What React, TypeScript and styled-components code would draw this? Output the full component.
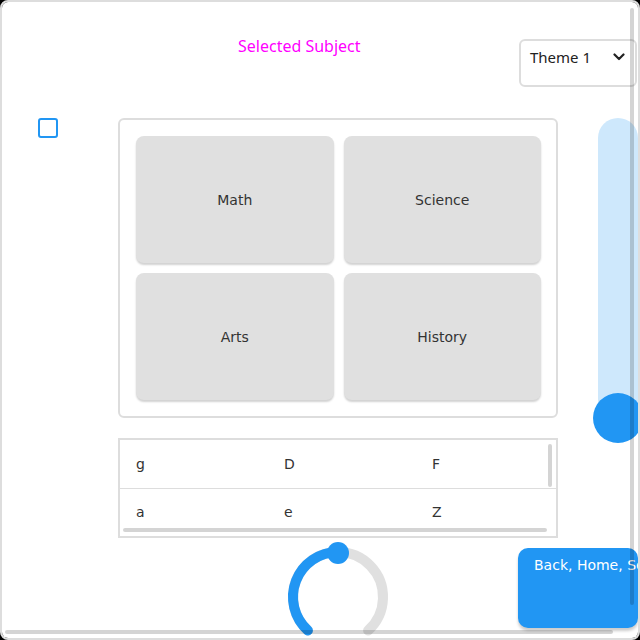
import React from "react";
import styled, { createGlobalStyle } from "styled-components";

const Global = createGlobalStyle`
  html, body { margin: 0; padding: 0; background: #000; }
  body { font-family: "DejaVu Sans", sans-serif; }
  * { box-sizing: border-box; }
`;

const Shell = styled.div`
  position: relative;
  width: 640px;
  height: 640px;
`;

const Frame = styled.div`
  width: 640px;
  height: 640px;
  background: #fff;
  border: 2px solid #ddd;
  border-radius: 8px;
  overflow: auto;
  scrollbar-width: none;
`;

const ScrollThumb = styled.div<{ $x: number; $y: number; $w: number; $h: number }>`
  position: absolute;
  left: ${(p) => p.$x}px;
  top: ${(p) => p.$y}px;
  width: ${(p) => p.$w}px;
  height: ${(p) => p.$h}px;
  border-radius: 2px;
  background: rgba(0, 0, 0, 0.17);
  pointer-events: none;
`;

const Content = styled.div`
  width: 656px;
  padding-bottom: 20px;
  display: flex;
  flex-direction: column;
`;

const Header = styled.div`
  display: grid;
  grid-template-columns: 517px 118px;
  align-items: start;
  height: 116px;
  padding-top: 33px;
`;

const Title = styled.div`
  padding-left: 236px;
  font-family: "Noto Sans", sans-serif;
  font-size: 16px;
  line-height: 22px;
  color: #ff00ff;
  white-space: nowrap;
`;

const ThemeSelect = styled.div`
  margin-top: 4px;
  height: 48px;
  padding: 6px 10px 0 9px;
  border: 2px solid #ddd;
  border-radius: 6px;
  background: #fff;
  display: flex;
  align-items: flex-start;
  justify-content: space-between;
  font-family: "Noto Sans", sans-serif;
  font-size: 15px;
  line-height: 20px;
  color: #222;
`;

const Chevron = styled.svg`
  margin-top: 6px;
  flex: none;
`;

const Middle = styled.div`
  display: flex;
  align-items: flex-start;
`;

const CheckCol = styled.div`
  width: 116px;
  padding-left: 36px;
`;

const Check = styled.input`
  appearance: none;
  display: block;
  margin: 0;
  width: 20px;
  height: 20px;
  border: 2px solid #2196f3;
  border-radius: 3px;
  background: #fff;
`;

const Main = styled.div`
  width: 440px;
  display: flex;
  flex-direction: column;
  gap: 20px;
`;

const SubjectCard = styled.div`
  height: 300px;
  border: 2px solid #ddd;
  border-radius: 6px;
  padding: 16px 15px 16px 16px;
  display: grid;
  grid-template-columns: 1fr 1fr;
  grid-template-rows: 1fr 1fr;
  gap: 10px;
`;

const SubjectButton = styled.button`
  border: none;
  border-radius: 8px;
  background: #e0e0e0;
  box-shadow: 0 2px 2px rgba(0, 0, 0, 0.18);
  font-family: "DejaVu Sans", sans-serif;
  font-size: 14px;
  color: #333;
  padding: 0;
`;

const TableWrap = styled.div`
  position: relative;
`;

const TableBox = styled.div`
  height: 100px;
  border: 2px solid #ddd;
  overflow: auto;
  scrollbar-width: none;
`;

const Table = styled.table`
  border-collapse: collapse;
  width: 444px;
  table-layout: fixed;
`;

const Cell = styled.td`
  height: 48px;
  padding: 0 0 0 16px;
  border-bottom: 1px solid #ddd;
  font-family: "DejaVu Sans", sans-serif;
  font-size: 14px;
  color: #333;
  text-align: left;
`;

const SliderCol = styled.div`
  margin-left: 40px;
`;

const Track = styled.div`
  position: relative;
  width: 40px;
  height: 320px;
  border-radius: 20px;
  background: rgba(33, 150, 243, 0.22);
`;

const Thumb = styled.div`
  position: absolute;
  left: -5px;
  width: 50px;
  height: 50px;
  border-radius: 50%;
  background: #2196f3;
`;

const Bottom = styled.div`
  display: flex;
  align-items: flex-start;
`;

const Knob = styled.svg`
  display: block;
  margin-left: 281px;
  margin-top: 4px;
  flex: none;
`;

const NavButton = styled.button`
  margin-left: 125px;
  margin-top: 10px;
  width: 120px;
  height: 80px;
  flex: none;
  border: none;
  border-radius: 10px;
  background: #2196f3;
  box-shadow: 0 3px 3px rgba(0, 0, 0, 0.2);
  color: #fff;
  font-family: "DejaVu Sans", sans-serif;
  font-size: 14px;
  text-align: left;
  padding: 9px 0 0 16px;
  white-space: nowrap;
  overflow: hidden;
  display: flex;
  align-items: flex-start;
`;

const subjects = ["Math", "Science", "Arts", "History"];
const rows = [
  ["g", "D", "F"],
  ["a", "e", "Z"],
];

function arcPoint(cx: number, cy: number, r: number, deg: number) {
  const rad = ((deg - 90) * Math.PI) / 180;
  return [cx + r * Math.cos(rad), cy + r * Math.sin(rad)];
}

function arcPath(cx: number, cy: number, r: number, a0: number, a1: number) {
  const [x0, y0] = arcPoint(cx, cy, r, a0);
  const [x1, y1] = arcPoint(cx, cy, r, a1);
  const large = a1 - a0 > 180 ? 1 : 0;
  return `M ${x0} ${y0} A ${r} ${r} 0 ${large} 1 ${x1} ${y1}`;
}

export default function App() {
  return (
    <>
      <Global />
      <Shell>
        <Frame>
          <Content>
            <Header>
              <Title>Selected Subject</Title>
              <ThemeSelect>
                <span>Theme 1</span>
                <Chevron width="12" height="8" viewBox="0 0 12 8">
                  <polyline
                    points="1.5,1.5 6,6 10.5,1.5"
                    fill="none"
                    stroke="#222"
                    strokeWidth="2.2"
                    strokeLinecap="round"
                    strokeLinejoin="round"
                  />
                </Chevron>
              </ThemeSelect>
            </Header>
            <Middle>
              <CheckCol>
                <Check type="checkbox" />
              </CheckCol>
              <Main>
                <SubjectCard>
                  {subjects.map((s) => (
                    <SubjectButton key={s}>{s}</SubjectButton>
                  ))}
                </SubjectCard>
                <TableWrap>
                  <TableBox>
                    <Table>
                      <tbody>
                        {rows.map((r, i) => (
                          <tr key={i}>
                            {r.map((c, j) => (
                              <Cell key={j}>{c}</Cell>
                            ))}
                          </tr>
                        ))}
                      </tbody>
                    </Table>
                  </TableBox>
                  <ScrollThumb $x={430} $y={6} $w={4} $h={43} />
                  <ScrollThumb $x={5} $y={90} $w={424} $h={4} />
                </TableWrap>
              </Main>
              <SliderCol>
                <Track>
                  <Thumb style={{ top: 275 }} />
                </Track>
              </SliderCol>
            </Middle>
            <Bottom>
              <Knob width="110" height="110" viewBox="0 0 110 110">
                <path
                  d={arcPath(55, 55, 45, -138, 138)}
                  fill="none"
                  stroke="#e0e0e0"
                  strokeWidth="10"
                  strokeLinecap="round"
                />
                <path
                  d={arcPath(55, 55, 45, -138, 0)}
                  fill="none"
                  stroke="#2196f3"
                  strokeWidth="10"
                  strokeLinecap="round"
                />
                <circle cx="55" cy="11" r="11" fill="#2196f3" />
              </Knob>
              <NavButton>Back, Home, Settings</NavButton>
            </Bottom>
          </Content>
        </Frame>
        <ScrollThumb $x={630} $y={8} $w={4} $h={597} />
        <ScrollThumb $x={5} $y={630} $w={608} $h={4} />
      </Shell>
    </>
  );
}
